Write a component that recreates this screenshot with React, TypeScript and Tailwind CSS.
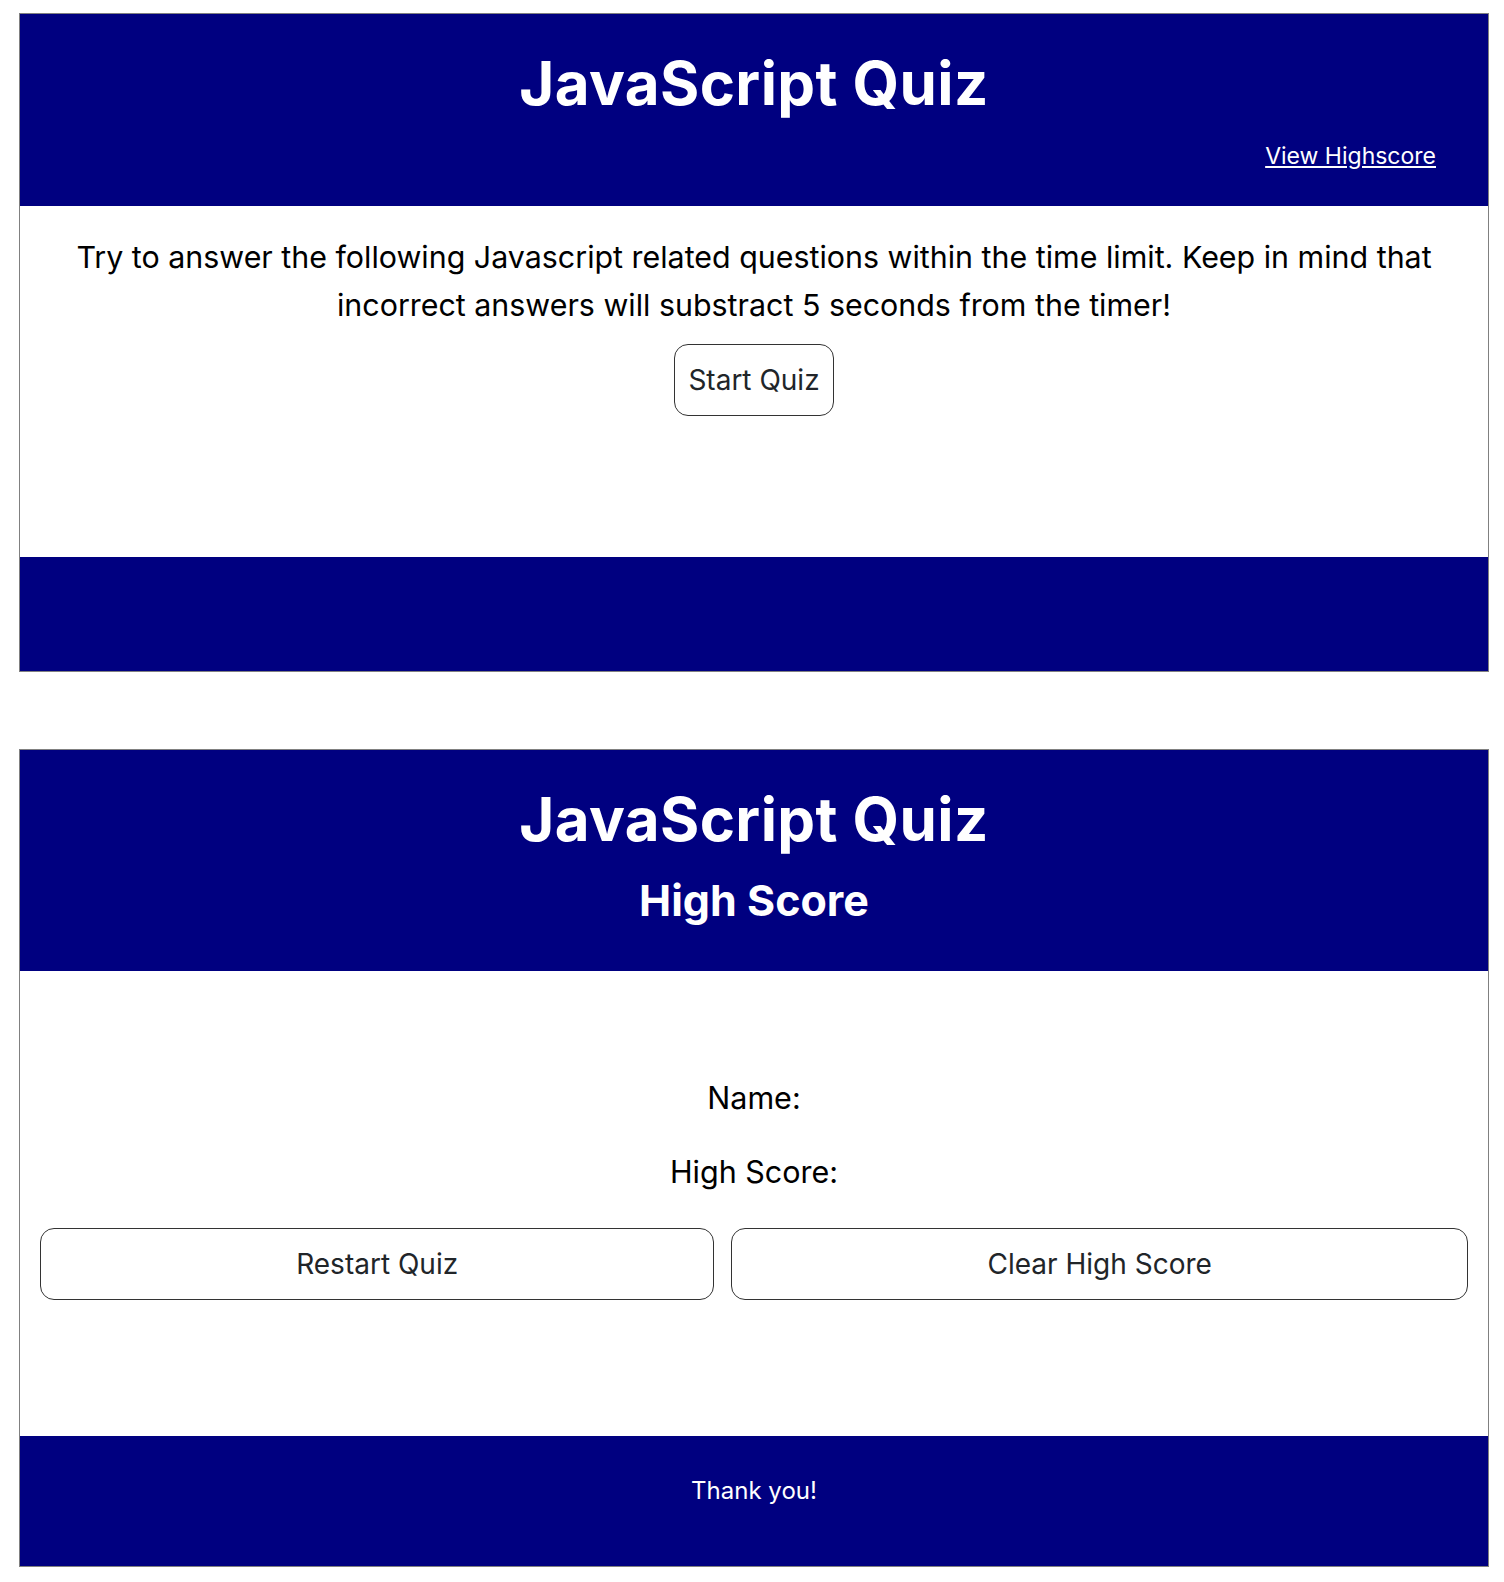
import React from 'react';

const font = { fontFamily: 'Inter, "Noto Sans", sans-serif' };

function Header({ subtitle, showLink }: { subtitle?: string; showLink?: boolean }) {
  return (
    <header className="bg-[#000080] text-white flex flex-col items-center">
      <h1 className="text-[60px] leading-[1.2] font-bold tracking-[0.4px] mt-[33px]">JavaScript Quiz</h1>
      {subtitle && <h2 className="text-[43px] leading-[1.2] font-bold mt-[20px]">{subtitle}</h2>}
      {showLink && (
        <a href="#" className="self-end mr-[52px] mt-[20px] text-[23px] leading-[1.5] underline">
          View Highscore
        </a>
      )}
    </header>
  );
}

export default function App() {
  return (
    <div className="min-h-screen bg-white pt-[13px] pl-[19px] pr-[15px] pb-[16px] text-black" style={font}>
      {/* start screen */}
      <section className="border border-[#808080]">
        <div className="h-[192px] bg-[#000080]">
          <Header showLink />
        </div>
        <main className="h-[351px] flex flex-col items-center px-[20px] pt-[28px] text-center">
          <p className="text-[30.4px] leading-[47.5px]">
            Try to answer the following Javascript related questions within the time limit. Keep in mind that
            incorrect answers will substract 5 seconds from the timer!
          </p>
          <button className="mt-[15px] px-[13px] py-[14px] border border-[#333] rounded-[14px] text-[28px] leading-[1.5] text-[#212529]">
            Start Quiz
          </button>
        </main>
        <footer className="h-[114px] bg-[#000080]" />
      </section>

      {/* high score screen */}
      <section className="mt-[77px] border border-[#808080]">
        <div className="h-[221px] bg-[#000080]">
          <Header subtitle="High Score" />
        </div>
        <main className="h-[465px] flex flex-col items-center pt-[104px] px-[20px]">
          <p className="text-[30.5px] leading-[1.5]">Name:</p>
          <p className="text-[30.5px] leading-[1.5] mt-[28px]">High Score:</p>
          <div className="w-full flex gap-[17px] mt-[33px]">
            <button className="flex-auto px-[14px] py-[14px] border border-[#333] rounded-[14px] text-[28px] leading-[1.5] text-[#212529]">
              Restart Quiz
            </button>
            <button className="flex-auto px-[14px] py-[14px] border border-[#333] rounded-[14px] text-[28px] leading-[1.5] text-[#212529]">
              Clear High Score
            </button>
          </div>
        </main>
        <footer className="h-[130px] bg-[#000080] text-white flex justify-center pt-[37px]">
          <p className="text-[24px] leading-[1.5]">Thank you!</p>
        </footer>
      </section>
    </div>
  );
}
